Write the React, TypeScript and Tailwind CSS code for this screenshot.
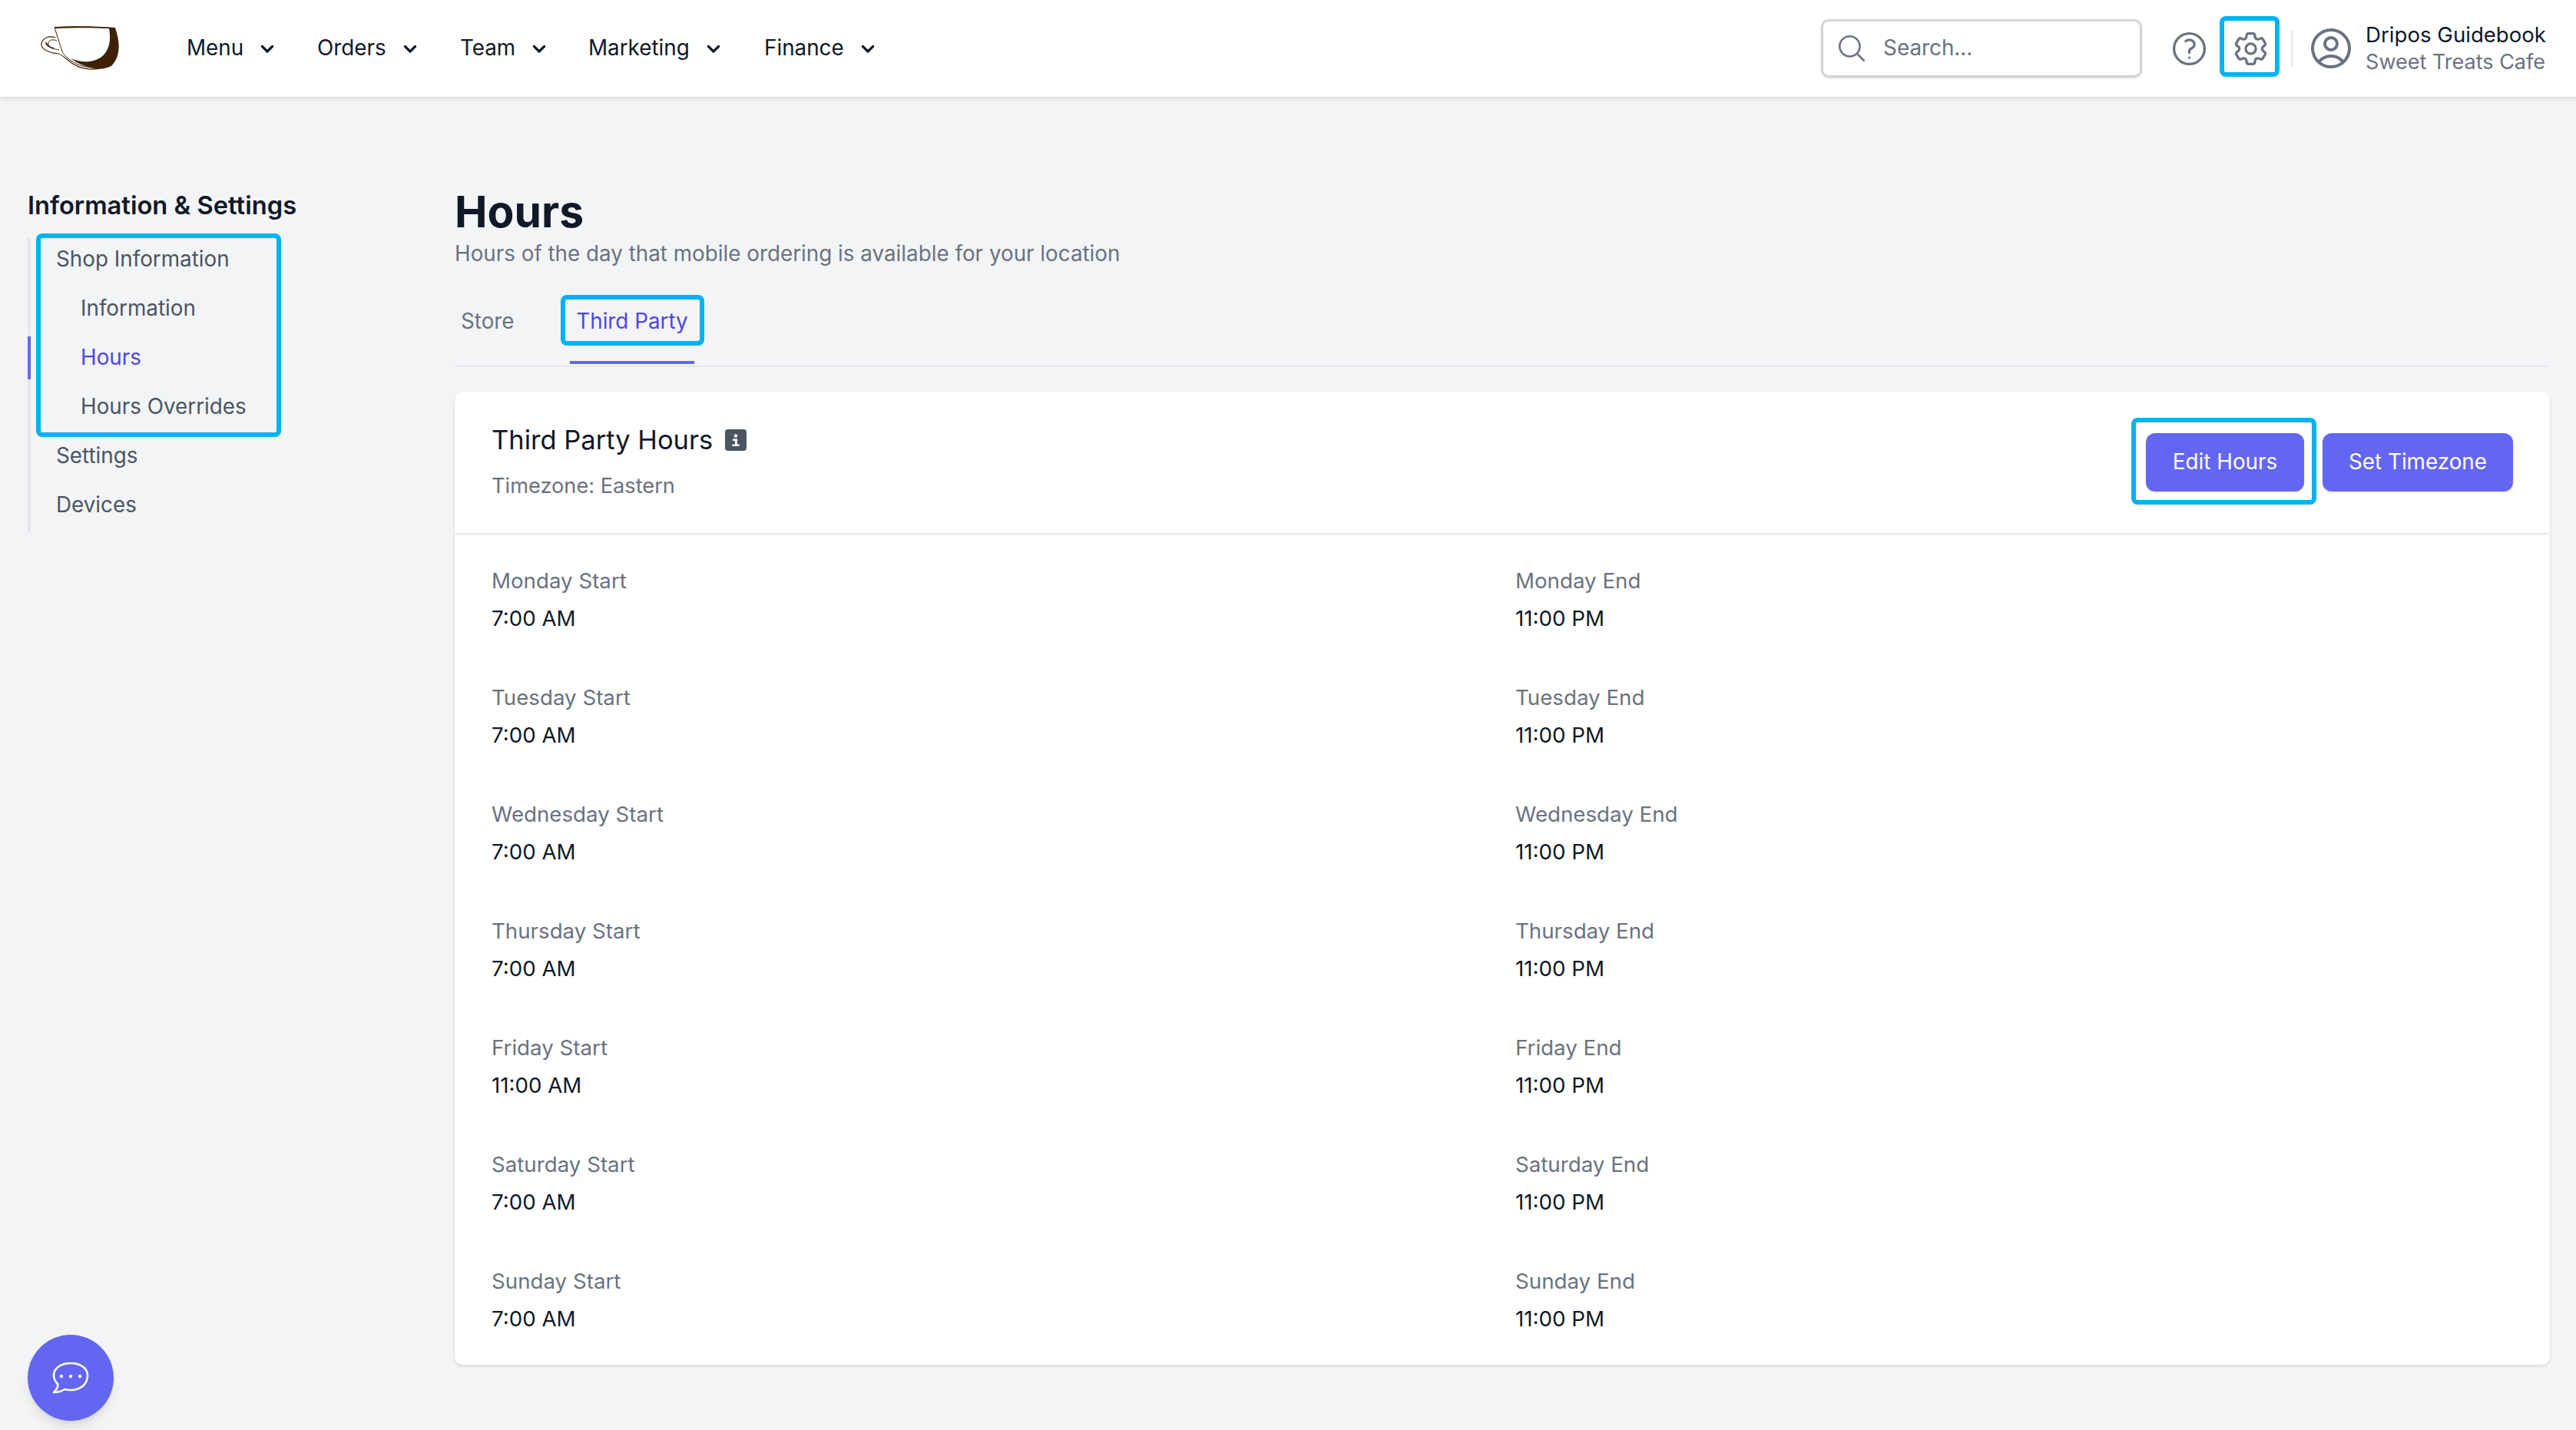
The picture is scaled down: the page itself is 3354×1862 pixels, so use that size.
import { HiOutlineMagnifyingGlass, HiOutlineQuestionMarkCircle, HiOutlineCog6Tooth, HiOutlineUserCircle } from 'react-icons/hi2';

const navItems = [
  { label: 'Menu', width: 'w-[170px]' },
  { label: 'Orders', width: 'w-[186px]' },
  { label: 'Team', width: 'w-[167px]' },
  { label: 'Marketing', width: 'w-[229px]' },
  { label: 'Finance', width: 'w-[170px]' },
];

const hours = [
  { day: 'Monday', start: '7:00 AM', end: '11:00 PM' },
  { day: 'Tuesday', start: '7:00 AM', end: '11:00 PM' },
  { day: 'Wednesday', start: '7:00 AM', end: '11:00 PM' },
  { day: 'Thursday', start: '7:00 AM', end: '11:00 PM' },
  { day: 'Friday', start: '11:00 AM', end: '11:00 PM' },
  { day: 'Saturday', start: '7:00 AM', end: '11:00 PM' },
  { day: 'Sunday', start: '7:00 AM', end: '11:00 PM' },
];

const Highlight = ({ className }: { className: string }) => (
  <div className={`absolute border-[6px] border-[#00b2f2] rounded-[8px] pointer-events-none ${className}`} />
);

const Logo = () => (
  <svg viewBox="0 0 110 60" className="w-[110px] h-[60px] shrink-0">
    <path d="M19 16C10 13 2 17 1 24c-1 7 10 12 22 13 5 1 9 6 16 11 10 8 26 11 38 8" fill="#fff" stroke="#3d2208" strokeWidth="1.2" />
    <path d="M21 20c-7-3-12 0-11 5 1 4 8 6 14 7" fill="none" stroke="#3d2208" strokeWidth="1" />
    <path d="M7 22c0 4 5 7 10 8" fill="none" stroke="#3d2208" strokeWidth="1.8" />
    <path d="M18 3c20-2 54-1 79 1l-1 0c3 20-3 44-17 49-20 5-35-3-42-9-5-4-8-7-9-10z" fill="#fff" stroke="#3d2208" strokeWidth="1" />
    <path d="M18 2c25-1 55-1 79 1 6 18 8 37-5 50-8 4-18 5-28 2-10-3-19-7-25-12 14 6 28 6 39-1 11-8 14-22 11-38-20-1-46-1-71 0z" fill="#3d2208" />
  </svg>
);

const ChatIcon = () => (
  <svg viewBox="0 0 48 42" className="w-[48px] h-[42px]" fill="none" stroke="#fff" strokeWidth="2.6" strokeLinejoin="round">
    <path d="M24 2C12 2 2 8 2 18c0 5 2 8 5 11 1 3-1 7-5 11 6 0 11-2 14-4 2 .5 5 1 8 1 12 0 22-7 22-19C46 8 36 2 24 2z" />
    <circle cx="12" cy="19" r="2.2" fill="#fff" stroke="none" />
    <circle cx="24" cy="19" r="2.2" fill="#fff" stroke="none" />
    <circle cx="36" cy="19" r="2.2" fill="#fff" stroke="none" />
  </svg>
);

const Field = ({ label, value }: { label: string; value: string }) => (
  <div className="flex flex-col">
    <span className="text-[#6b7280] text-[27.7px] leading-[40px]">{label}</span>
    <span className="text-[#111827] text-[27.7px] leading-[40px] mt-[9px]">{value}</span>
  </div>
);

const SideItem = ({ label, indent, active }: { label: string; indent?: boolean; active?: boolean }) => (
  <div className={`h-[56px] flex items-center text-[27.8px] ${indent ? 'pl-[65px]' : 'pl-[33px]'} ${active ? 'text-[#4f46e5] border-l-[4px] border-[#6366f1] -ml-[4px]' : 'text-[#4b5563]'}`}>
    {label}
  </div>
);

export default function App() {
  return (
    <div className="relative min-h-[1862px] bg-[#f3f4f6] font-['Inter',sans-serif]">
      <header className="h-[126px] bg-white shadow-[0_2px_5px_rgba(0,0,0,0.12)] flex items-center pl-[53px] pr-[39px]">
        <Logo />
        <nav className="flex items-center ml-[80px]">
          {navItems.map((item) => (
            <div key={item.label} className={`flex items-center gap-[15px] text-[27.8px] text-[#111827] ${item.width}`}>
              <span>{item.label}</span>
              <svg viewBox="0 0 24 24" className="w-[32px] h-[32px]" fill="none" stroke="#111827" strokeWidth="2.4" strokeLinecap="round" strokeLinejoin="round">
                <path d="M7 10l5 5 5-5" />
              </svg>
            </div>
          ))}
        </nav>
        <div className="ml-auto flex items-center">
          <div className="w-[418px] h-[76px] bg-white border-[3px] border-[#d1d5db] rounded-[10px] shadow-sm flex items-center pl-[16px] gap-[20px]">
            <HiOutlineMagnifyingGlass className="text-[#6b7280] w-[42px] h-[42px]" />
            <span className="text-[#6b7280] text-[27.8px]">Search...</span>
          </div>
          <HiOutlineQuestionMarkCircle className="text-[#6b7280] w-[53px] h-[53px] ml-[35px]" />
          <div className="relative ml-[27px] flex items-center">
            <HiOutlineCog6Tooth className="text-[#6b7280] w-[53px] h-[53px]" />
            <Highlight className="-left-[14px] -right-[11px] -top-[16px] -bottom-[10px]" />
          </div>
          <div className="w-[2px] h-[48px] bg-[#e5e7eb] ml-[26px]" />
          <HiOutlineUserCircle className="text-[#6b7280] w-[64px] h-[64px] ml-[18px]" />
          <div className="ml-[13px] flex flex-col">
            <span className="text-[27.6px] leading-[36px] text-[#111827]">Dripos Guidebook</span>
            <span className="text-[27px] leading-[36px] text-[#6b7280]">Sweet Treats Cafe</span>
          </div>
        </div>
      </header>

      <div className="flex pl-[36px] pr-[34px]">
        <aside className="w-[556px] shrink-0 pt-[119px]">
          <h2 className="text-[32.7px] leading-[44px] font-semibold text-[#111827]">Information &amp; Settings</h2>
          <div className="mt-[21px] w-[340px] border-l-[4px] border-[#e5e7eb] flex flex-col gap-[8px] pb-[8px]">
            <div className="relative flex flex-col gap-[8px]">
              <SideItem label="Shop Information" />
              <SideItem label="Information" indent />
              <SideItem label="Hours" indent active />
              <SideItem label="Hours Overrides" indent />
              <Highlight className="left-[7px] w-[319px] -top-[6px] -bottom-[11px]" />
            </div>
            <SideItem label="Settings" />
            <SideItem label="Devices" />
          </div>
        </aside>

        <main className="flex-1 min-w-0">
          <h1 className="mt-[114px] text-[57px] leading-[72px] font-bold text-[#111827]">Hours</h1>
          <p className="text-[27.8px] leading-[40px] text-[#6b7280] -mt-[2px]">Hours of the day that mobile ordering is available for your location</p>
          <div className="mt-[24px] h-[104px] border-b-[2px] border-[#e5e7eb] flex items-start">
            <div className="ml-[8px] w-[128px] h-[100px] pt-[26px] text-[27.8px] leading-[36px] text-[#6b7280]">Store</div>
            <div className="relative ml-[14px] w-[162px] h-[100px] pt-[26px] border-b-[4px] border-[#6366f1] text-center text-[27.8px] leading-[36px] text-[#4f46e5]">
              Third Party
              <Highlight className="-left-[12px] -right-[13px] top-[10px] bottom-[20px]" />
            </div>
          </div>

          <section className="mt-[32px] bg-white rounded-[10px] shadow-[0_2px_4px_rgba(0,0,0,0.12)]">
            <div className="h-[186px] border-b-[2px] border-[#e5e7eb] flex items-center justify-between pl-[48px] pr-[48px]">
              <div className="flex flex-col -mt-[2px]">
                <div className="flex items-center gap-[16px]">
                  <span className="text-[34.5px] leading-[48px] text-[#111827]">Third Party Hours</span>
                  <span className="w-[28px] h-[28px] bg-[#4b5563] rounded-[4px] flex items-center justify-center">
                    <svg viewBox="0 0 28 28" className="w-[28px] h-[28px]" fill="#fff">
                      <circle cx="14" cy="8.5" r="2.2" />
                      <path d="M10 12.5h6v7h2.5v2.5h-9v-2.500H13v-4.500h-3z" />
                    </svg>
                  </span>
                </div>
                <span className="mt-[16px] text-[27.200px] leading-[40px] text-[#6b7280]">Timezone: Eastern</span>
              </div>
              <div className="flex items-center gap-[24px]">
                <div className="relative">
                  <button className="w-[206px] h-[76px] rounded-[12px] bg-[#6366f1] text-white text-[27.8px] shadow-sm">Edit Hours</button>
                  <Highlight className="-left-[19px] -right-[16px] -top-[20px] -bottom-[17px]" />
                </div>
                <button className="w-[248px] h-[76px] rounded-[12px] bg-[#6366f1] text-white text-[27.8px] shadow-sm">Set Timezone</button>
              </div>
            </div>
            <div className="pl-[48px] pt-[40px] pb-[40px] flex flex-col gap-[63px]">
              {hours.map((row) => (
                <div key={row.day} className="grid grid-cols-[1333px_1fr]">
                  <Field label={`${row.day} Start`} value={row.start} />
                  <Field label={`${row.day} End`} value={row.end} />
                </div>
              ))}
            </div>
          </section>
        </main>
      </div>

      <button className="absolute left-[36px] top-[1738px] w-[112px] h-[112px] rounded-full bg-[#6366f1] shadow-lg flex items-center justify-center">
        <ChatIcon />
      </button>
    </div>
  );
}
